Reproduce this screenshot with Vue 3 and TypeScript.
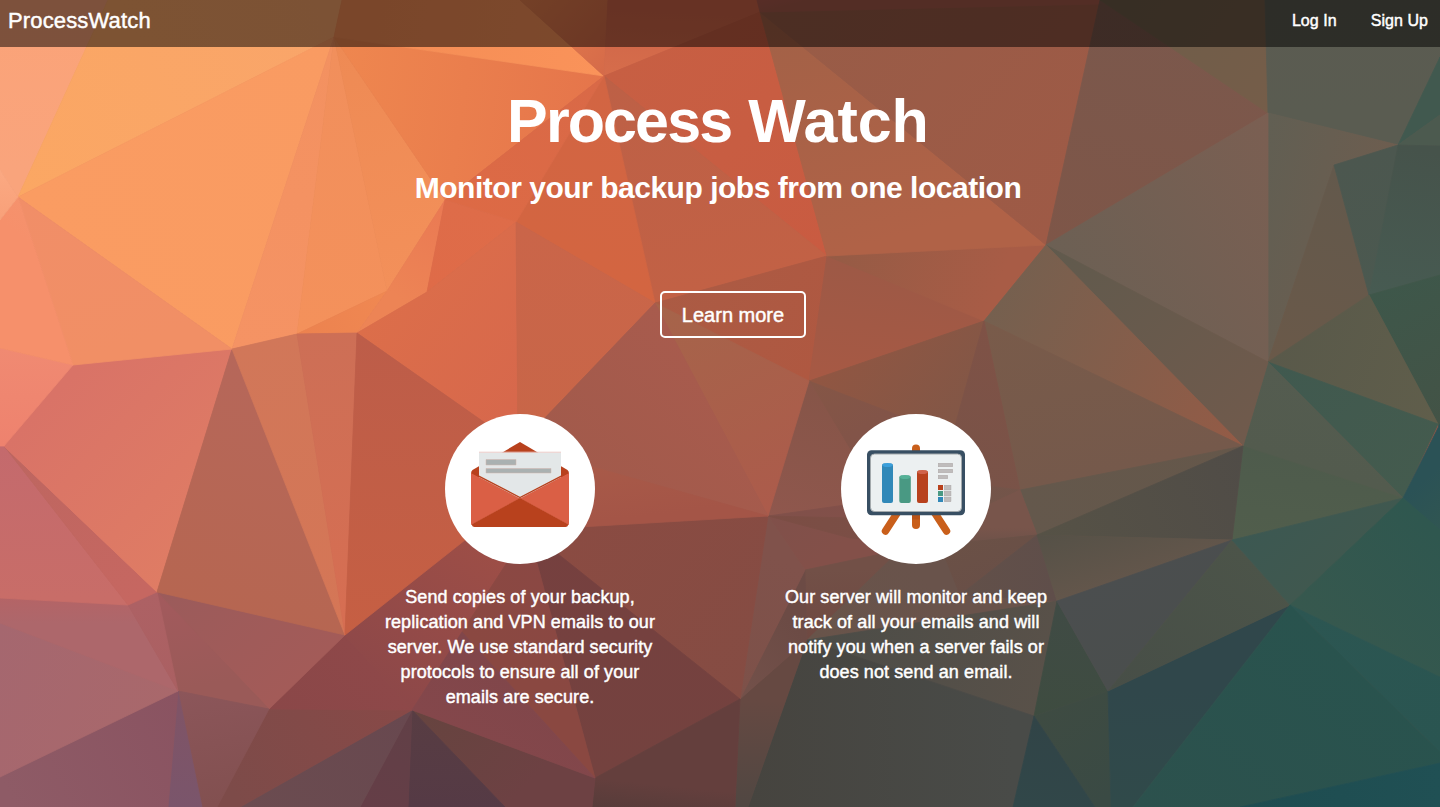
<script setup lang="ts">
interface Facet {
  points: string
  from: string
  to: string
  x1: number
  y1: number
  x2: number
  y2: number
}

// Each facet shades from its first vertex to its last one.
function facet(points: string, from: string, to: string = from): Facet {
  const v = points.split(' ').map((p) => p.split(',').map(Number))
  const a = v[0]
  const b = v[v.length - 1]
  return { points, from, to, x1: a[0], y1: a[1], x2: b[0], y2: b[1] }
}

const facets: Facet[] = [
  facet('0,0 108,0 18,197 0,170', '#fba378', '#f9a47c'),
  facet('18,197 108,0 342,0 334,37', '#fba763', '#f9a56a'),
  facet('18,197 232,349 334,37', '#fa9c62', '#f99b62'),
  facet('232,349 297,334 334,37', '#f59364', '#f39160'),
  facet('297,334 387,291 334,37', '#f4915b', '#f18f5c'),
  facet('387,291 445,200 334,37', '#f3905a', '#ee8a54'),
  facet('297,334 357,333 387,291', '#ec824f', '#f08852'),
  facet('387,291 357,333 427,292 445,200', '#ed8455', '#ea7953'),
  facet('334,37 445,200 604,76', '#ef874f', '#e5754b'),
  facet('334,37 342,0 520,0 604,76', '#f48c54', '#fa935a'),
  facet('520,0 608,0 604,76', '#e8814e', '#d56a49'),
  facet('608,0 757,0 760,12 604,76', '#ce6448', '#d66d4b'),
  facet('604,76 760,12 827,256', '#c75f43', '#c95b41'),
  facet('604,76 827,256 655,303', '#bd6046', '#c26145'),
  facet('604,76 655,303 516,222', '#d26543', '#d36541'),
  facet('604,76 516,222 445,200', '#d96947', '#dd6a45'),
  facet('445,200 516,222 427,292', '#de6c49', '#df6b48'),
  facet('357,333 427,292 516,222 518,446', '#dc6e4a', '#d6674c'),
  facet('516,222 655,303 518,446', '#ca6549', '#c86648'),
  facet('655,303 827,256 809,381', '#ab5b44', '#af5841'),
  facet('827,256 984,321 809,381', '#9d5946', '#a75944'),
  facet('827,256 1046,245 984,321', '#955b45', '#a85c46'),
  facet('760,12 1046,245 827,256', '#a26147', '#b06247'),
  facet('760,12 1100,4 1046,245', '#985c47', '#9e5a46'),
  facet('757,0 1100,0 1100,4 760,12', '#b05a4e', '#a75b4b'),
  facet('1100,0 1268,113 1046,245', '#7b584c', '#7e5648'),
  facet('1100,0 1265,0 1268,113', '#6e5d49', '#755d49'),
  facet('1265,0 1440,0 1440,57 1398,145 1268,113', '#5b5b51', '#5a5c51'),
  facet('1398,145 1440,57 1440,115', '#41594f'),
  facet('1398,145 1440,115 1440,146', '#4c5a4f'),
  facet('1398,145 1334,165 1268,362 1268,113', '#6d5d4f', '#615f53'),
  facet('1046,245 1268,362 1268,113', '#6c6054', '#7b5f52'),
  facet('1334,165 1369,295 1268,362', '#63594c', '#6a5949'),
  facet('1334,165 1398,145 1369,295', '#4c574f', '#4b5950'),
  facet('1398,145 1440,146 1440,275 1369,295', '#46534b', '#475b52'),
  facet('1369,295 1440,275 1440,430 1438,424', '#3e574a', '#435346'),
  facet('1268,362 1369,295 1438,424', '#59594a', '#605e4b'),
  facet('1268,362 1438,424 1403,498', '#40594f', '#445b4e'),
  facet('1268,362 1403,498 1243,446', '#545c50', '#535b4e'),
  facet('1243,446 1403,498 1232,540', '#4e5b4c', '#515e4c'),
  facet('1046,245 1268,362 1243,446', '#605a4d', '#705a4c'),
  facet('984,321 1046,245 1243,446', '#75604f', '#945b46'),
  facet('984,321 1243,446 1020,490', '#795b4a', '#75594b'),
  facet('1243,446 1037,535 1020,490', '#65574a', '#64584c'),
  facet('1243,446 1232,540 1037,535', '#504c47', '#565246'),
  facet('809,381 984,321 940,480', '#915642', '#805747'),
  facet('984,321 1020,490 940,480', '#7f5246', '#795348'),
  facet('940,480 1020,490 940,528', '#745449', '#71564b'),
  facet('940,528 1020,490 1037,535 940,548', '#78554b', '#6a5149'),
  facet('809,381 900,416 940,480 880,500', '#855646', '#7f524a'),
  facet('809,381 880,500 768,516', '#865548', '#8f574d'),
  facet('768,516 880,500 940,545 805,570', '#80504a', '#835049'),
  facet('768,516 850,538 940,545 940,520', '#7b4d44', '#7b5047'),
  facet('805,570 900,550 900,580 807,640', '#725047', '#6f4942'),
  facet('900,550 1037,535 1057,601 807,640', '#69534b', '#68544a'),
  facet('940,545 1037,535 960,595', '#6b5146', '#694f47'),
  facet('960,595 1037,535 1057,601', '#625049', '#5f4e4a'),
  facet('1037,535 1232,540 1057,601', '#555147', '#63564b'),
  facet('807,640 1057,601 1034,716', '#4b4c47', '#595149'),
  facet('748,807 807,640 1034,716 1013,807', '#46443f', '#494b48'),
  facet('740,699 807,640 748,807 735,807', '#664942', '#504742'),
  facet('740,699 805,570 807,640', '#73514a', '#6c4b45'),
  facet('740,699 768,516 805,570', '#7d5149', '#80524b'),
  facet('528,530 768,516 740,699', '#8b4b42', '#854c43'),
  facet('528,530 740,699 595,778', '#76403f', '#74423f'),
  facet('595,778 740,699 735,807 592,807', '#643f3d', '#573c3a'),
  facet('412,710 595,778 592,807 505,807', '#66443f', '#6d4143'),
  facet('412,710 505,807 408,807', '#583d43', '#553a45'),
  facet('412,710 408,807 360,807', '#614047', '#653e47'),
  facet('412,710 360,807 240,807', '#68484f', '#6b4c50'),
  facet('412,710 269,709 217,807 240,807', '#884947', '#7d4b49'),
  facet('345,635 412,710 269,709', '#8e4849', '#8a4748'),
  facet('412,710 345,635 465,540 528,530', '#8d4849', '#a04f46'),
  facet('528,530 595,778 462,632', '#8b4844', '#8a4841'),
  facet('462,632 595,778 412,710', '#80464a', '#84474b'),
  facet('157,592 345,635 269,709', '#9b5b5b', '#a35b58'),
  facet('157,592 269,709 178,691', '#a35a5d', '#9a5a58'),
  facet('178,691 269,709 217,807 202,807', '#8c565a', '#825050'),
  facet('178,691 202,807 168,807', '#805466', '#7a556b'),
  facet('178,691 168,807 0,807 0,777', '#8a5361', '#8e5b66'),
  facet('178,691 0,777 0,623', '#a9686b', '#a5676f'),
  facet('0,598 128,605 178,691 0,623', '#b46466', '#ad676b'),
  facet('128,605 157,592 178,691', '#ad6164', '#aa6062'),
  facet('0,446 4,446 128,605 0,598', '#c46a6d', '#c86d68'),
  facet('4,446 157,592 128,605', '#bd6660', '#c66761'),
  facet('4,446 157,592 73,365 232,349', '#d77166', '#e38168'),
  facet('4,446 73,365 232,349 157,592', '#d97367', '#df7c64'),
  facet('232,349 345,635 157,592', '#b6675a', '#b66651'),
  facet('232,349 297,334 345,635', '#d17759', '#d57656'),
  facet('297,334 357,333 345,635', '#cd6f56', '#d76e52'),
  facet('357,333 518,446 528,530 465,540 345,635', '#bd5d49', '#c65f43'),
  facet('0,348 73,365 4,446 0,446', '#f08a72', '#ee826e'),
  facet('18,197 232,349 73,365', '#f18e68', '#f18f65'),
  facet('18,197 73,365 0,348 0,220', '#f5926d', '#f6906b'),
  facet('0,170 18,197 0,220', '#fba982', '#f8a079'),
  facet('655,303 809,381 768,516', '#a6644a', '#ac5b4b'),
  facet('655,303 768,516 518,446', '#a85b4d', '#a15a4b'),
  facet('518,446 768,516 528,530', '#aa5c49', '#a45547'),
  facet('1057,601 1108,691 1034,716', '#404b45', '#3e4c40'),
  facet('1034,716 1108,691 1111,807 1095,807', '#3e4b42', '#3a4a44'),
  facet('1034,716 1095,807 1013,807', '#314447', '#314749'),
  facet('1108,691 1290,605 1133,807 1111,807', '#30474b', '#304a4a'),
  facet('1057,601 1232,540 1108,691', '#4b4e4f', '#4a4e4d'),
  facet('1232,540 1290,605 1108,691', '#4c5449', '#474e47'),
  facet('1232,540 1403,498 1290,605', '#3c5852', '#40584f'),
  facet('1403,498 1440,424 1440,540', '#2b5256', '#315651'),
  facet('1403,498 1440,530 1440,677 1290,605', '#2f574f', '#37584e'),
  facet('1290,605 1440,677 1440,752', '#2c5652', '#2a5551'),
  facet('1290,605 1440,752 1440,763 1240,807 1133,807', '#29534e', '#2c514d'),
  facet('1240,807 1440,763 1440,807', '#1e4c50', '#205054'),
]

interface Feature {
  icon: 'mail' | 'board'
  lines: string[]
}

const features: Feature[] = [
  {
    icon: 'mail',
    lines: [
      'Send copies of your backup,',
      'replication and VPN emails to our',
      'server. We use standard security',
      'protocols to ensure all of your',
      'emails are secure.',
    ],
  },
  {
    icon: 'board',
    lines: [
      'Our server will monitor and keep',
      'track of all your emails and will',
      'notify you when a server fails or',
      'does not send an email.',
    ],
  },
]
</script>

<template>
  <div class="page">
    <svg class="backdrop" viewBox="0 0 1440 807" preserveAspectRatio="xMidYMid slice" aria-hidden="true">
      <defs>
        <linearGradient
          v-for="(f, i) in facets"
          :id="`facet-${i}`"
          :key="i"
          gradientUnits="userSpaceOnUse"
          :x1="f.x1"
          :y1="f.y1"
          :x2="f.x2"
          :y2="f.y2"
        >
          <stop offset="0" :stop-color="f.from" />
          <stop offset="1" :stop-color="f.to" />
        </linearGradient>
      </defs>
      <polygon
        v-for="(f, i) in facets"
        :key="i"
        :points="f.points"
        :fill="`url(#facet-${i})`"
        :stroke="`url(#facet-${i})`"
        stroke-width="0.8"
        stroke-linejoin="bevel"
      />
    </svg>

    <header class="navbar">
      <a class="brand">ProcessWatch</a>
      <nav class="links">
        <a class="link">Log In</a>
        <a class="link">Sign Up</a>
      </nav>
    </header>

    <main class="content">
      <h1 class="title"><span class="tight">Process</span> <span>Watch</span></h1>
      <h2 class="subtitle">Monitor your backup jobs from one location</h2>
      <button class="more" type="button">Learn more</button>

      <section class="features">
        <article v-for="item in features" :key="item.icon" class="feature">
          <div class="disc">
            <svg v-if="item.icon === 'mail'" width="150" height="150" viewBox="0 0 150 150">
              <path d="M75 28 L122.500 56 Q124 57 124 60 L75 86 L26 60 Q26 57 27.500 56 Z" fill="#b8411d" />
              <path d="M34 38.500 H116 V64 L75 86 L34 64 Z" fill="#e3e7e8" />
              <path d="M34 38.200 H116" stroke="#eccbc8" stroke-width="1" />
              <path d="M41 45.500 h30 v5.500 h-30 Z M41 54.500 h65 v4.500 h-65 Z" fill="#aab1b1" stroke="#d3b5ad" stroke-width=".5" />
              <path d="M26 59 L75 84.500 L26.500 111 Q26 110.500 26 109 Z" fill="#da5f45" />
              <path d="M124 59 L75 84.500 L123.500 111 Q124 110.500 124 109 Z" fill="#da5f45" />
              <path d="M27 58.700 L75 83.500 L123 58.700" fill="none" stroke="#b8411d" stroke-width="1.400" />
              <path d="M75 84 L123.500 110.500 Q122.500 113 120.500 113 H29.500 Q27.500 113 26.500 110.500 Z" fill="#b8411d" />
            </svg>
            <svg v-else width="150" height="150" viewBox="0 0 150 150">
              <path d="M75 34.500 V111" stroke="#c95f1b" stroke-width="8" stroke-linecap="round" />
              <path d="M57.500 97 L44.500 117 M92.500 97 L105.500 117" stroke="#c95f1b" stroke-width="7.500" stroke-linecap="round" />
              <path d="M71 101 H79 V105.500 H71 Z" fill="#a94813" opacity=".5" />
              <rect x="26" y="36.300" width="98" height="65" rx="4.500" fill="#384f63" />
              <rect x="29.500" y="40" width="91" height="57.500" rx="4" fill="#ecf0f1" stroke="#a3a9ac" stroke-width="1" />
              <rect x="41" y="49.500" width="11" height="39.500" rx="2" fill="#3188b8" />
              <ellipse cx="46.500" cy="51" rx="5" ry="2" fill="#3b9fdb" />
              <rect x="58.300" y="61.500" width="11.500" height="27.500" rx="2" fill="#499983" />
              <ellipse cx="64" cy="63" rx="5.200" ry="2" fill="#55b197" />
              <rect x="76" y="56.500" width="11" height="32.500" rx="2" fill="#b8411d" />
              <ellipse cx="81.500" cy="58" rx="5" ry="2" fill="#d0624a" />
              <g fill="#bfbcbc" stroke="#aaa3a3" stroke-width=".4">
                <rect x="97.200" y="49.200" width="14.600" height="3.600" />
                <rect x="97.200" y="55.200" width="14.600" height="3.600" />
                <rect x="97.200" y="61.200" width="9.600" height="3.600" />
                <rect x="103.200" y="71.200" width="6.800" height="4.800" />
                <rect x="103.200" y="77.200" width="6.800" height="4.800" />
                <rect x="103.200" y="83.200" width="6.800" height="4.600" />
              </g>
              <rect x="97" y="71" width="5" height="5" fill="#b8411d" />
              <rect x="97" y="77" width="5" height="5" fill="#499983" />
              <rect x="97" y="83" width="5" height="5" fill="#3188b8" />
            </svg>
          </div>
          <p class="copy">
            <span v-for="line in item.lines" :key="line" class="line">{{ line }}</span>
          </p>
        </article>
      </section>
    </main>
  </div>
</template>

<style>
body {
  margin: 0;
  overflow: hidden;
}
</style>

<style scoped>
.page {
  position: relative;
  width: 100%;
  height: 100vh;
  overflow: hidden;
  background: #8a5548;
  color: #fff;
  font-family: "Liberation Sans", Arial, sans-serif;
}

.backdrop {
  position: absolute;
  inset: 0;
  width: 100%;
  height: 100%;
}

.navbar {
  position: relative;
  display: flex;
  justify-content: space-between;
  box-sizing: border-box;
  height: 47px;
  padding: 8px 12px 0 8px;
  background: rgba(0, 0, 0, 0.5);
}

.brand {
  font-size: 22px;
  line-height: 25px;
  letter-spacing: 0.15px;
  -webkit-text-stroke: 0.45px #fff;
}

.links {
  display: flex;
  gap: 34px;
}

.link {
  font-size: 16px;
  line-height: 26px;
  letter-spacing: 0.05px;
  -webkit-text-stroke: 0.45px #fff;
}

.content {
  position: relative;
  display: flex;
  flex-direction: column;
  align-items: center;
  width: 1436px;
}

.title {
  margin: 41px 0 0;
  font-size: 61px;
  line-height: 66px;
  font-weight: 700;
  white-space: nowrap;
}

.tight {
  letter-spacing: -1.9px;
}

.subtitle {
  margin: 17px 0 0;
  font-size: 30px;
  line-height: 33px;
  font-weight: 700;
  letter-spacing: -0.48px;
  white-space: nowrap;
}

.more {
  box-sizing: border-box;
  width: 146px;
  height: 47px;
  margin: 87px 0 0 30px;
  padding: 0;
  border: 2px solid #fff;
  border-radius: 5px;
  background: transparent;
  color: #fff;
  font: 20px/1 "Liberation Sans", Arial, sans-serif;
  -webkit-text-stroke: 0.45px #fff;
}

.features {
  display: grid;
  grid-template-columns: 396px 396px;
  margin-top: 76px;
}

.feature {
  display: flex;
  flex-direction: column;
  align-items: center;
}

.disc {
  width: 150px;
  height: 150px;
  border-radius: 50%;
  background: #fff;
}

.disc svg {
  display: block;
}

.copy {
  margin: 21px 0 0;
  font-size: 18px;
  line-height: 25px;
  letter-spacing: 0.09px;
  text-align: center;
  -webkit-text-stroke: 0.45px #fff;
}

.line {
  display: block;
  white-space: nowrap;
}
</style>
